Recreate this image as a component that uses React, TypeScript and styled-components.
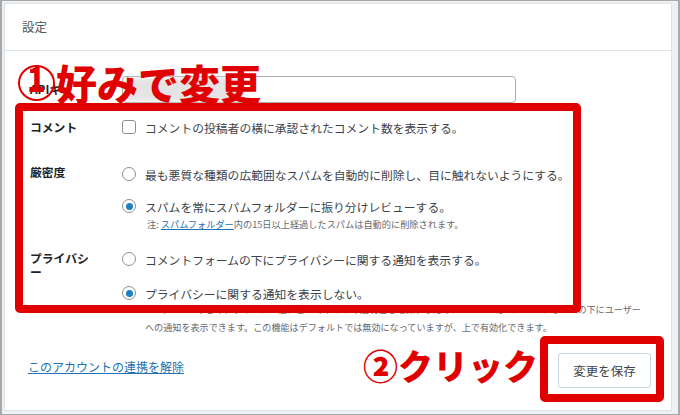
import React from "react";
import styled, { createGlobalStyle } from "styled-components";

const GlobalStyle = createGlobalStyle`
  html, body { margin: 0; padding: 0; background: #f0f0f1; }
  body { font-family: "Noto Sans CJK JP", "Noto Sans", sans-serif; }
  * { box-sizing: border-box; }
`;

const Frame = styled.div`
  position: relative;
  width: 680px;
  height: 415px;
  background: #f0f0f1;
  box-shadow: inset 2px 1px 0 #a7aaad, inset -2px -1px 0 #a7aaad;
  padding: 3px 8px 4px 4px;
  overflow: hidden;
`;

const Card = styled.div`
  height: 100%;
  background: #fff;
  border: 1px solid #dbe3e9;
  display: flex;
  flex-direction: column;
`;

const Header = styled.div`
  height: 47px;
  flex: none;
  display: flex;
  align-items: center;
  padding: 0 0 2px 17px;
  border-bottom: 1px solid #dde4ea;
  font-size: 12.5px;
  color: #50575e;
`;

const Body = styled.div`
  padding: 25px 0 0 25px;
  display: flex;
  flex-direction: column;
`;

const Row = styled.div<{ $mt?: number }>`
  display: grid;
  grid-template-columns: 92px 1fr;
  align-items: start;
  margin-top: ${(p) => p.$mt ?? 0}px;
`;

const Label = styled.div<{ $mt?: number }>`
  max-width: 66px;
  font-size: 11.8px;
  font-weight: 700;
  line-height: 14px;
  color: #1d2327;
  margin-top: ${(p) => p.$mt ?? 3}px;
`;

const Field = styled.div`
  display: flex;
  flex-direction: column;
`;

const Input = styled.div`
  width: 394px;
  height: 27px;
  border: 1px solid #a7aaad;
  border-radius: 4px;
  padding: 1px 3px;
  display: flex;
`;

const Masked = styled.span`
  width: 116px;
  height: 100%;
  background: #e4e4e4;
  filter: blur(2px);
`;

const Option = styled.label<{ $mt?: number }>`
  display: flex;
  align-items: center;
  gap: 9px;
  height: 20px;
  font-size: 11.8px;
  color: #3c434a;
  white-space: nowrap;
  margin-top: ${(p) => p.$mt ?? 0}px;
`;

const Check = styled.span`
  width: 14px;
  height: 14px;
  flex: none;
  border: 1px solid #8c8f94;
  border-radius: 3px;
  background: #fff;
`;

const Radio = styled.span<{ $on?: boolean }>`
  width: 14px;
  height: 14px;
  flex: none;
  border: 1px solid #8c8f94;
  border-radius: 50%;
  background: #fff;
  display: flex;
  align-items: center;
  justify-content: center;
  &::after {
    content: "";
    display: ${(p) => (p.$on ? "block" : "none")};
    width: 7px;
    height: 7px;
    border-radius: 50%;
    background: #1d80c3;
  }
`;

const Note = styled.div`
  padding-left: 25px;
  height: 16px;
  line-height: 16px;
  font-size: 9.2px;
  color: #646970;
  white-space: nowrap;
`;

const Desc = styled.p`
  margin: -3px 0 0 23px;
  font-size: 9.1px;
  line-height: 18px;
  color: #646970;
  white-space: nowrap;
`;

const InlineLink = styled.a`
  color: #2271b1;
  text-decoration: underline;
`;

const Footer = styled.div`
  margin-top: 17px;
  padding: 0 20px 0 23px;
  display: flex;
  justify-content: space-between;
  align-items: flex-start;
`;

const Disconnect = styled.a`
  margin-top: 5px;
  font-size: 12px;
  line-height: 17px;
  color: #2271b1;
  text-decoration: underline;
`;

const SaveButton = styled.button`
  width: 93px;
  height: 35px;
  background: #fff;
  border: 1px solid #c9d7e1;
  border-radius: 3px;
  font-family: inherit;
  font-size: 12.5px;
  color: #3c434a;
  padding: 0;
`;

const Annotation = styled.div<{ $x: number; $y: number; $size: number }>`
  position: absolute;
  left: ${(p) => p.$x}px;
  top: ${(p) => p.$y}px;
  display: flex;
  align-items: center;
  font-family: "Noto Sans CJK JP", sans-serif;
  font-size: ${(p) => p.$size}px;
  font-weight: 900;
  line-height: 1;
  color: #e00000;
  white-space: nowrap;
`;

const CircleNum = styled.span`
  width: 37px;
  height: 36px;
  flex: none;
  margin-right: 1px;
  border: 2px solid #e00000;
  border-radius: 50%;
  display: flex;
  justify-content: center;
  align-items: flex-start;
  overflow: visible;
  font-size: 34px;
  line-height: 1;
  & > span {
    margin-top: -6px;
    transform: scaleX(0.9);
  }
`;

const RedBox = styled.div<{ $x: number; $y: number; $w: number; $h: number }>`
  position: absolute;
  left: ${(p) => p.$x}px;
  top: ${(p) => p.$y}px;
  width: ${(p) => p.$w}px;
  height: ${(p) => p.$h}px;
  border: 8px solid #e00000;
  border-radius: 5px;
`;

export default function App() {
  return (
    <>
      <GlobalStyle />
      <Frame>
        <Card>
          <Header>設定</Header>
          <Body>
            <Row>
              <Label $mt={6}>APIキー</Label>
              <Input>
                <Masked />
              </Input>
            </Row>
            <Row $mt={14}>
              <Label>コメント</Label>
              <Field>
                <Option>
                  <Check />
                  コメントの投稿者の横に承認されたコメント数を表示する。
                </Option>
              </Field>
            </Row>
            <Row $mt={27}>
              <Label $mt={1}>厳密度</Label>
              <Field>
                <Option>
                  <Radio />
                  最も悪質な種類の広範囲なスパムを自動的に削除し、目に触れないようにする。
                </Option>
                <Option $mt={12}>
                  <Radio $on />
                  スパムを常にスパムフォルダーに振り分けレビューする。
                </Option>
                <Note>
                  注: <InlineLink>スパムフォルダー</InlineLink>内の15日以上経過したスパムは自動的に削除されます。
                </Note>
              </Field>
            </Row>
            <Row $mt={17}>
              <Label $mt={2}>プライバシー</Label>
              <Field>
                <Option>
                  <Radio />
                  コメントフォームの下にプライバシーに関する通知を表示する。
                </Option>
                <Option $mt={14}>
                  <Radio $on />
                  プライバシーに関する通知を表示しない。
                </Option>
                <Desc>
                  EU の GDPR などのプライバシー法に基づくサイトの透明性を確保するため、Akismet はコメントフォームの下にユーザー
                  <br />
                  への通知を表示できます。この機能はデフォルトでは無効になっていますが、上で有効化できます。
                </Desc>
              </Field>
            </Row>
          </Body>
          <Footer>
            <Disconnect>このアカウントの連携を解除</Disconnect>
            <SaveButton>変更を保存</SaveButton>
          </Footer>
        </Card>
        <RedBox $x={15} $y={103} $w={566} $h={210} />
        <RedBox $x={540} $y={336} $w={124} $h={66} />
        <Annotation $x={18} $y={62} $size={41}>
          <CircleNum>
            <span>1</span>
          </CircleNum>
          好みで変更
        </Annotation>
        <Annotation $x={363} $y={347} $size={35}>②クリック</Annotation>
      </Frame>
    </>
  );
}
